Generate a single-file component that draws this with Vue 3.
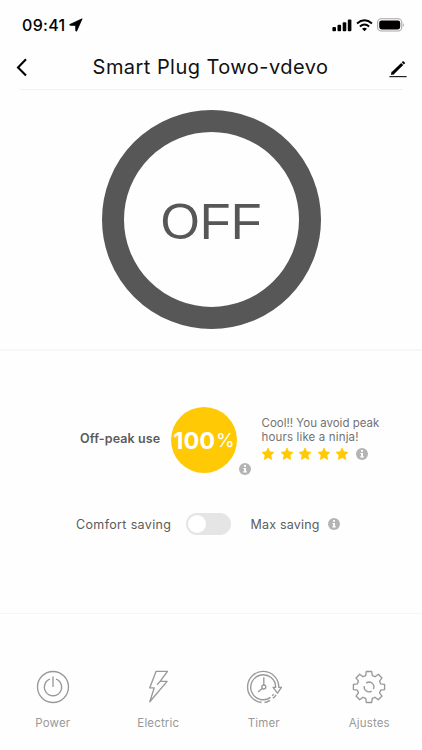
<template>
  <div class="screen">
    <div class="status-bar">
      <div class="status-left">
        <span class="clock">09:41</span>
        <svg class="location" width="14" height="14" viewBox="0 0 13 13">
          <path d="M12.2 0.7 L0.8 6 Q0.2 6.6 1 6.8 L6.1 6.9 L6.3 12 Q6.7 12.8 7.2 12 Z" fill="#000" stroke="#000" stroke-width="0.7" stroke-linejoin="round" />
        </svg>
      </div>
      <div class="status-right">
        <svg width="20" height="13" viewBox="0 0 20 13">
          <rect x="0.4" y="8" width="3.6" height="4.3" rx="1" />
          <rect x="5.5" y="5.8" width="3.6" height="6.5" rx="1" />
          <rect x="10.7" y="3.3" width="3.6" height="9" rx="1" />
          <rect x="15.8" y="0.5" width="3.6" height="11.8" rx="1" />
        </svg>
        <svg class="wifi" width="17" height="13" viewBox="0 0 17 13" fill="none" stroke="#000" stroke-width="2">
          <path d="M1 4.5 Q8.5 -1.9 16 4.5" />
          <path d="M3.9 7.5 Q8.5 3.6 13.1 7.5" />
          <path d="M6 9.7 Q8.5 7.8 11 9.7 L8.5 12.2 Z" fill="#000" stroke="none" />
        </svg>
        <svg width="28" height="14" viewBox="0 0 28 14">
          <rect x="0.6" y="0.8" width="24.2" height="12.2" rx="3.8" fill="none" stroke="#aaa3a8" stroke-width="1.1" />
          <rect x="2.2" y="2.4" width="21" height="9" rx="2.4" />
          <path d="M26 4.9 Q27.5 6.9 26 8.9 Z" fill="#888" />
        </svg>
      </div>
    </div>

    <header class="header">
      <svg class="back" width="12" height="19" viewBox="0 0 12 19" fill="none" stroke="#000" stroke-width="2.1">
        <path d="M10 1.2 L2 9.4 L10 17.6" />
      </svg>
      <h1 class="title">Smart Plug Towo-vdevo</h1>
      <svg class="edit" width="18" height="18" viewBox="0 0 18 18">
        <path d="M3.6 13.4 L13.2 4" stroke="#000" stroke-width="3" />
        <path d="M13.8 3.4 L15.2 2" stroke="#000" stroke-width="3" />
        <path d="M2 15 L2.6 11.6 L5.4 14.3 Z" />
        <path d="M0.4 16.6 H17.6" stroke="#222" stroke-width="1.2" />
      </svg>
    </header>

    <section class="plug">
      <button class="ring" @click="toggle">{{ isOn ? 'ON' : 'OFF' }}</button>
    </section>

    <section class="usage">
      <div class="peak">
        <span class="peak-label">Off-peak use</span>
        <div class="score">
          <span class="score-value">{{ offPeak }}</span><span class="score-unit">%</span>
          <svg class="info score-info" viewBox="0 0 12 12">
            <circle cx="6" cy="6" r="6" />
            <path :d="infoPath" />
          </svg>
        </div>
        <div class="review">
          <p>Cool!! You avoid peak</p>
          <p class="second">hours like a ninja!</p>
          <div class="stars">
            <svg v-for="n in 5" :key="n" class="star" viewBox="0 0 14 14">
              <path d="M7 1 L8.8 4.8 L13 5.3 L9.9 8.2 L10.7 12.5 L7 10.4 L3.3 12.5 L4.1 8.2 L1 5.3 L5.2 4.8 Z" />
            </svg>
            <svg class="info" viewBox="0 0 12 12">
              <circle cx="6" cy="6" r="6" />
              <path :d="infoPath" />
            </svg>
          </div>
        </div>
      </div>

      <div class="saving">
        <span class="comfort">Comfort saving</span>
        <button class="switch" :class="{ active: maxSaving }" @click="maxSaving = !maxSaving">
          <span class="knob"></span>
        </button>
        <span class="max">Max saving</span>
        <svg class="info" viewBox="0 0 12 12">
          <circle cx="6" cy="6" r="6" />
          <path :d="infoPath" />
        </svg>
      </div>
    </section>

    <nav class="tabs">
      <div v-for="tab in tabs" :key="tab.name" class="tab">
        <svg class="tab-icon" width="36" height="36" viewBox="0 0 36 36">
          <template v-if="tab.name === 'power'">
            <circle cx="18" cy="18" r="15.5" />
            <path d="M14.9 10.1 A8.6 8.6 0 1 0 21.1 10.1" />
            <path d="M18 7.5 V18" />
          </template>
          <template v-else-if="tab.name === 'electric'">
            <path d="M16 2.4 H27.5 L20.1 12.4 H27.1 L9.8 32.8 L14.2 18.9 H9.7 Z M20.1 12.4 L17.1 15.7" />
          </template>
          <template v-else-if="tab.name === 'timer'">
            <path d="M24 31.4 Q21.5 33.1 18.5 33.5" />
            <path d="M15.5 33.5 A15.6 15.6 0 1 1 32.8 18.3 H35.5 L31.5 24.2 L27.1 18.3 H29.7 A12.5 12.5 0 1 0 24.5 28.4" />
            <path d="M26.2 26.9 L27.7 25.1 M26.8 29.3 Q28.9 27.8 30.1 25.8" />
            <circle cx="17.8" cy="18" r="2" />
            <path d="M17.8 16 V8.2 M16.2 19.4 L12 23" />
          </template>
          <template v-else>
            <path d="M15.3 2.5 H20.7 L21.3 6.6 L24 7.7 L27.3 5.2 L31 8.9 L28.5 12.1 L29.6 14.8 L33.6 15.4 V20.6 L29.6 21.2 L28.5 23.9 L31 27.1 L27.3 30.8 L24 28.3 L21.3 29.4 L20.7 33.5 H15.3 L14.7 29.4 L12 28.3 L8.7 30.8 L5 27.1 L7.5 23.9 L6.4 21.2 L2.4 20.6 V15.4 L6.4 14.8 L7.5 12.1 L5 8.9 L8.7 5.2 L12 7.7 L14.7 6.6 Z" />
            <path d="M15.2 14.1 A4.8 4.8 0 0 1 22.4 20 M20.6 22.1 A4.8 4.8 0 0 1 13.3 17.2" />
          </template>
        </svg>
        <span class="tab-label">{{ tab.label }}</span>
      </div>
    </nav>
  </div>
</template>

<script setup>
import { ref } from 'vue';

const isOn = ref(false);
const maxSaving = ref(false);
const offPeak = ref(100);

const infoPath = 'M5 1.9 H7 V3.8 H5 Z M4.4 4.9 H7 V8.3 H7.8 V9.5 H4.3 V8.3 H5.1 V6 H4.4 Z';

const tabs = [
  { name: 'power', label: 'Power' },
  { name: 'electric', label: 'Electric' },
  { name: 'timer', label: 'Timer' },
  { name: 'settings', label: 'Ajustes' }
];

function toggle() {
  isOn.value = !isOn.value;
}
</script>

<style>
body {
  margin: 0;
  background: #fefefe;
}
</style>

<style scoped>
.screen {
  width: 422px;
  height: 750px;
  display: flex;
  flex-direction: column;
  overflow: hidden;
  background: #fefefe;
  font-family: Inter, "Open Sans", sans-serif;
  color: #5b5b5b;
}

.status-bar {
  height: 46px;
  box-sizing: border-box;
  padding: 4px 17px 0 22px;
  display: flex;
  align-items: center;
  justify-content: space-between;
}

.status-left,
.status-right {
  display: flex;
  align-items: center;
}

.status-left {
  gap: 4px;
}

.status-right {
  gap: 4px;
}

.clock {
  font-size: 16px;
  line-height: 20px;
  font-weight: 500;
  letter-spacing: 0.3px;
  color: #000;
}

.header {
  height: 44px;
  box-sizing: border-box;
  margin: 0 19px 0 20px;
  padding: 0 0 1px;
  border-bottom: 1px solid #f1f1f1;
  display: flex;
  align-items: center;
  justify-content: space-between;
}

.back {
  margin-left: -4px;
}

.edit {
  margin-right: -4px;
  margin-top: 3px;
}

.title {
  margin: 0;
  padding-left: 4px;
  font-size: 20px;
  line-height: 28px;
  font-weight: 400;
  letter-spacing: 0.45px;
  color: #111;
}

.plug {
  height: 259px;
  padding-top: 20px;
  box-sizing: border-box;
  display: flex;
  justify-content: center;
  align-items: flex-start;
}

.ring {
  width: 219px;
  height: 219px;
  box-sizing: border-box;
  padding: 4px 0 0 0;
  border: 22px solid #575757;
  border-radius: 50%;
  background: none;
  font-family: "Liberation Sans", Arial, sans-serif;
  font-size: 50.5px;
  color: #575757;
  cursor: pointer;
}

.usage {
  height: 262px;
  border-top: 2px solid #f7f7f7;
  border-bottom: 1px solid #f5f5f5;
}

.peak {
  display: flex;
  align-items: center;
  padding: 56px 0 0 80px;
}

.peak-label {
  width: 91px;
  padding-bottom: 3px;
  font-size: 12.5px;
  font-weight: 600;
  letter-spacing: 0.1px;
  white-space: nowrap;
}

.score {
  position: relative;
  width: 66px;
  height: 66px;
  border-radius: 50%;
  background: #ffca05;
  color: #fff;
  display: flex;
  align-items: center;
  justify-content: center;
}

.score-value {
  font-size: 23.5px;
  font-weight: 700;
}

.score-unit {
  margin-left: 1px;
  font-size: 19px;
  font-weight: 400;
}

.info {
  width: 12px;
  height: 12px;
  flex-shrink: 0;
}

.info circle {
  fill: #b4b4b4;
}

.info path {
  fill: #fff;
}

.score-info {
  position: absolute;
  left: 68px;
  top: 56px;
}

.review {
  margin-left: 24.5px;
  padding-bottom: 3px;
  color: #727272;
}

.review p {
  margin: 0;
  font-size: 11.5px;
  line-height: 14px;
  white-space: nowrap;
}

.review .second {
  letter-spacing: 0.15px;
}

.stars {
  display: flex;
  align-items: center;
  gap: 4.5px;
  margin-top: 3px;
  margin-left: -0.5px;
}

.star {
  width: 14px;
  height: 14px;
}

.star path {
  fill: #ffca05;
  stroke: #ffca05;
  stroke-width: 0.8;
  stroke-linejoin: round;
}

.stars .info {
  margin-left: 2.5px;
}

.saving {
  display: flex;
  align-items: center;
  padding: 40px 0 0 76px;
  font-size: 12.5px;
}

.comfort {
  width: 110px;
  letter-spacing: 0.35px;
  white-space: nowrap;
}

.max {
  width: 77.5px;
  letter-spacing: 0.2px;
  white-space: nowrap;
}

.switch {
  width: 45px;
  height: 22px;
  margin-right: 19.5px;
  padding: 2px;
  box-sizing: border-box;
  border: none;
  border-radius: 11px;
  background: #e5e5e5;
  display: flex;
  cursor: pointer;
}

.switch.active {
  justify-content: flex-end;
  background: #ffca05;
}

.knob {
  width: 18px;
  height: 18px;
  border-radius: 50%;
  background: #fff;
}

.tabs {
  display: flex;
  padding-top: 55px;
}

.tab {
  flex: 1;
  display: flex;
  flex-direction: column;
  align-items: center;
}

.tab-icon {
  fill: none;
  stroke: #999;
  stroke-width: 1.35;
  stroke-linejoin: round;
}

.tab-label {
  margin-top: 11px;
  font-size: 11.5px;
  line-height: 14px;
  letter-spacing: 0.15px;
  color: #999;
}
</style>
